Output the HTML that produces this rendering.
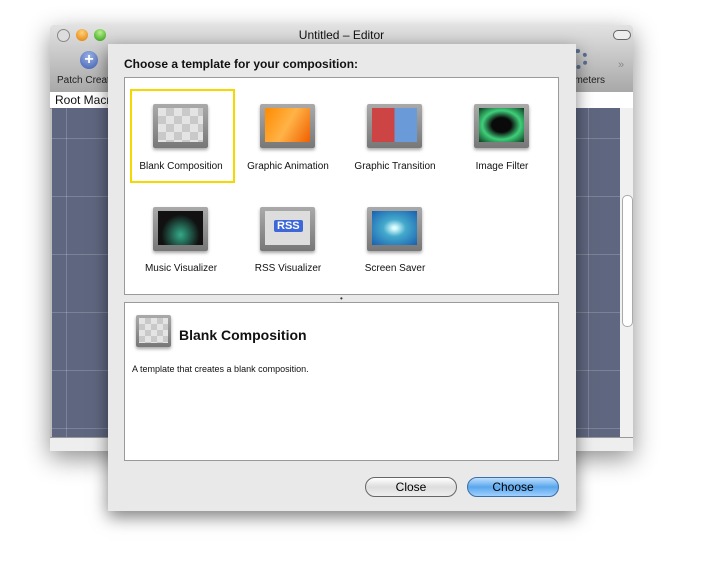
<html><head><style>
body{margin:0;width:720px;height:580px;background:#fff;position:relative;overflow:hidden;font-family:"Liberation Sans",sans-serif;}
.abs{position:absolute}
.win{left:50px;top:25px;width:583px;height:425px;background:#bdbdbd;box-shadow:0 8px 25px rgba(0,0,0,.45);border-radius:5px 5px 0 0}
.tb{left:0;top:0;width:583px;height:67px;background:linear-gradient(#e2e2e2,#a8a8a8);border-radius:5px 5px 0 0}
.dot{width:12px;height:12px;border-radius:50%;top:4px}
.grid{left:2px;top:83px;width:568px;height:329px;background-color:#5f6780;background-image:linear-gradient(90deg,rgba(255,255,255,.18) 1px,transparent 1px),linear-gradient(rgba(255,255,255,.18) 1px,transparent 1px);background-size:58px 58px;background-position:14px 30px}
.sheet{left:108px;top:44px;width:468px;height:467px;background:#e9e9e9;box-shadow:0 6px 16px rgba(0,0,0,.5)}
.panel{background:#fff;border:1px solid #9a9a9a}
.icon{width:55px;height:44px;border-radius:2px;background:linear-gradient(#aaa,#777);box-shadow:0 2px 3px rgba(0,0,0,.35)}
.icon div{position:absolute;left:5px;top:4px;right:5px;bottom:6px}
.chk{background-color:#e4e4e4;background-image:linear-gradient(45deg,#c9c9c9 25%,transparent 25%,transparent 75%,#c9c9c9 75%),linear-gradient(45deg,#c9c9c9 25%,transparent 25%,transparent 75%,#c9c9c9 75%);background-size:16px 16px;background-position:0 0,8px 8px}
.lbl{font-size:10px;color:#111;text-align:center;width:120px}
.btn{height:18px;border-radius:10px;border:1px solid #666;font-size:12px;text-align:center;line-height:18px}
</style></head><body>
<div class="abs win">
 <div class="abs tb"></div>
 <div class="abs dot" style="left:7px;background:#ddd;border:1px solid #888;width:11px;height:11px"></div>
 <div class="abs dot" style="left:26px;background:radial-gradient(circle at 50% 30%,#ffd27a,#e07a00)"></div>
 <div class="abs dot" style="left:44px;background:radial-gradient(circle at 50% 30%,#b9f28a,#2c9a14)"></div>
 <div class="abs" style="left:0;width:583px;top:3px;text-align:center;font-size:12px;color:#111">Untitled – Editor</div>
 <div class="abs" style="left:563px;top:5px;width:16px;height:8px;border-radius:5px;border:1px solid #666;background:#eee"></div>
 <div class="abs" style="left:30px;top:26px;width:18px;height:18px;border-radius:50%;background:radial-gradient(circle at 50% 30%,#9db3e8,#3f5fb0);color:#fff;font-size:16px;font-weight:bold;text-align:center;line-height:18px">+</div>
 <div class="abs" style="left:7px;top:50px;font-size:10px;color:#222">Patch Creat</div>
 <div class="abs" style="left:518px;top:24px;width:20px;height:20px;border-radius:50%;border:4px dotted #5a7090;box-sizing:border-box"></div>
 <div class="abs" style="left:510px;top:50px;font-size:10px;color:#222">arameters</div>
 <div class="abs" style="left:568px;top:34px;font-size:11px;color:#888">»</div>
 <div class="abs" style="left:0;top:67px;width:583px;height:16px;background:#fff;border-bottom:1px solid #999"></div>
 <div class="abs" style="left:5px;top:68px;font-size:12px;color:#111">Root Macr</div>
 <div class="abs grid"></div>
 <div class="abs" style="left:570px;top:83px;width:13px;height:329px;background:#f0f0f0"></div>
 <div class="abs" style="left:572px;top:170px;width:9px;height:130px;border-radius:5px;background:#fff;border:1px solid #aaa"></div>
 <div class="abs" style="left:0;top:412px;width:583px;height:13px;background:#eee;border-top:1px solid #999"></div>
</div>
<div class="abs sheet">
 <div class="abs" style="left:16px;top:13px;font-size:12px;font-weight:bold;color:#111">Choose a template for your composition:</div>
 <div class="abs panel" style="left:16px;top:33px;width:433px;height:216px"></div>
 <div class="abs" style="left:22px;top:45px;width:101px;height:90px;border:2px solid #f5d800"></div>
 <div class="abs" style="left:232px;top:250px;font-size:8px;color:#333">•</div>
 <div class="abs panel" style="left:16px;top:258px;width:433px;height:157px"></div>
 <div class="abs icon" style="left:28px;top:271px;width:35px;height:32px"><div class="chk" style="left:3px;top:3px;right:3px;bottom:4px;background-size:12px 12px;background-position:0 0,6px 6px"></div></div>
 <div class="abs" style="left:71px;top:283px;font-size:14px;font-weight:bold;color:#111">Blank Composition</div>
 <div class="abs" style="left:24px;top:320px;font-size:9px;color:#111">A template that creates a blank composition.</div>
 <div class="abs btn" style="left:257px;top:433px;width:90px;background:linear-gradient(#fff,#ddd 50%,#eee)">Close</div>
 <div class="abs btn" style="left:359px;top:433px;width:90px;background:linear-gradient(#bfe0ff,#5aa6ec 50%,#9fd0ff);border-color:#3b6ea5">Choose</div>
</div>
<div class="abs icon" style="left:153px;top:104px"><div class="chk"></div></div>
<div class="abs icon" style="left:260px;top:104px"><div style="background:linear-gradient(120deg,#ff8a00,#ffb347 50%,#f06000)"></div></div>
<div class="abs icon" style="left:367px;top:104px"><div style="background:linear-gradient(90deg,#c44 50%,#6a9ad8 50%)"></div></div>
<div class="abs icon" style="left:474px;top:104px"><div style="background:radial-gradient(#0a0a0a 30%,#3fcf7a 60%,#0b3a1d)"></div></div>
<div class="abs icon" style="left:153px;top:207px"><div style="background:radial-gradient(ellipse at 50% 70%,#3a8 ,#111 60%)"></div></div>
<div class="abs icon" style="left:260px;top:207px"><div style="background:#ddd"><span style="position:absolute;left:9px;top:9px;background:#3e68d8;color:#fff;font-size:11px;font-weight:bold;padding:0 3px;border-radius:2px">RSS</span></div></div>
<div class="abs icon" style="left:367px;top:207px"><div style="background:radial-gradient(ellipse,#dff 5%,#4ac 35%,#1a5fb0)"></div></div>
<div class="abs lbl" style="left:121px;top:161px">Blank Composition</div>
<div class="abs lbl" style="left:228px;top:161px">Graphic Animation</div>
<div class="abs lbl" style="left:335px;top:161px">Graphic Transition</div>
<div class="abs lbl" style="left:442px;top:161px">Image Filter</div>
<div class="abs lbl" style="left:121px;top:263px">Music Visualizer</div>
<div class="abs lbl" style="left:228px;top:263px">RSS Visualizer</div>
<div class="abs lbl" style="left:335px;top:263px">Screen Saver</div>
</body></html>
